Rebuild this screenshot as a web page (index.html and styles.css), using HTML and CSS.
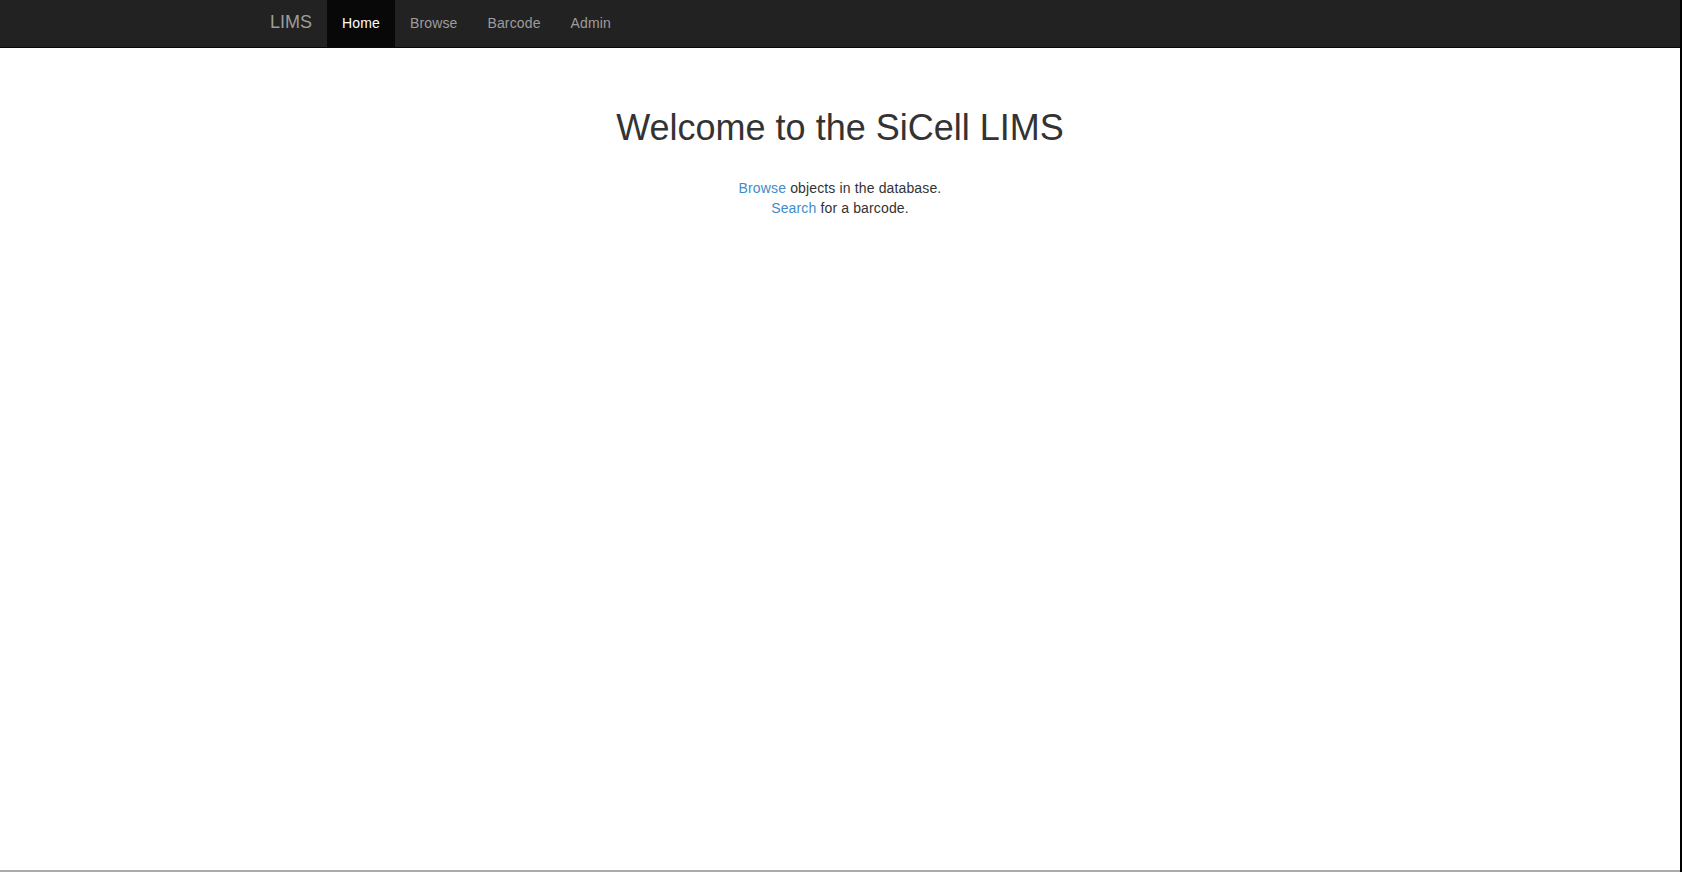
FILE: index.html
```html
<!DOCTYPE html>
<html lang="en">
<head>
<meta charset="utf-8">
<title>SiCell LIMS</title>
<link rel="stylesheet" href="styles.css">
</head>
<body>
<nav class="navbar">
  <div class="container nav-inner">
    <a class="brand" href="#">LIMS</a>
    <ul class="nav">
      <li class="active"><a href="#">Home</a></li>
      <li><a href="#">Browse</a></li>
      <li><a href="#">Barcode</a></li>
      <li><a href="#">Admin</a></li>
    </ul>
  </div>
</nav>
<main class="container main">
  <h1 class="title">Welcome to the SiCell LIMS</h1>
  <p class="intro">
    <a href="#">Browse</a> objects in the database.<br>
    <a href="#">Search</a> for a barcode.
  </p>
</main>
</body>
</html>
```

FILE: styles.css
```css
html {
  background: #000;
}
body {
  margin: 0;
  width: 1680px;
  height: 870px;
  border-bottom: 2px solid #aaa;
  background: #fff;
  font-family: "Liberation Sans", Helvetica, Arial, sans-serif;
  font-size: 14px;
  line-height: 20px;
  color: #333;
  letter-spacing: 0.14px;
}
a {
  color: #428bca;
  text-decoration: none;
}
.container {
  width: 1140px;
  margin: 0 auto;
}
.navbar {
  background: #222;
  border-bottom: 1px solid #080808;
  height: 47px;
}
.nav-inner {
  display: flex;
  height: 47px;
}
.brand {
  color: #9d9d9d;
  font-size: 18px;
  line-height: 20px;
  letter-spacing: 0;
  padding: 12px 15px 15px 0;
}
.nav {
  display: flex;
  list-style: none;
  margin: 0;
  padding: 0;
}
.nav a {
  display: block;
  color: #9d9d9d;
  padding: 13px 15px 14px;
  line-height: 20px;
}
.nav .active a {
  background: #080808;
  color: #fff;
}
.main {
  text-align: center;
}
.title {
  font-size: 36px;
  font-weight: 500;
  line-height: 40px;
  letter-spacing: 0;
  margin: 60px 0 30px;
}
.intro {
  margin: 0;
}
```
